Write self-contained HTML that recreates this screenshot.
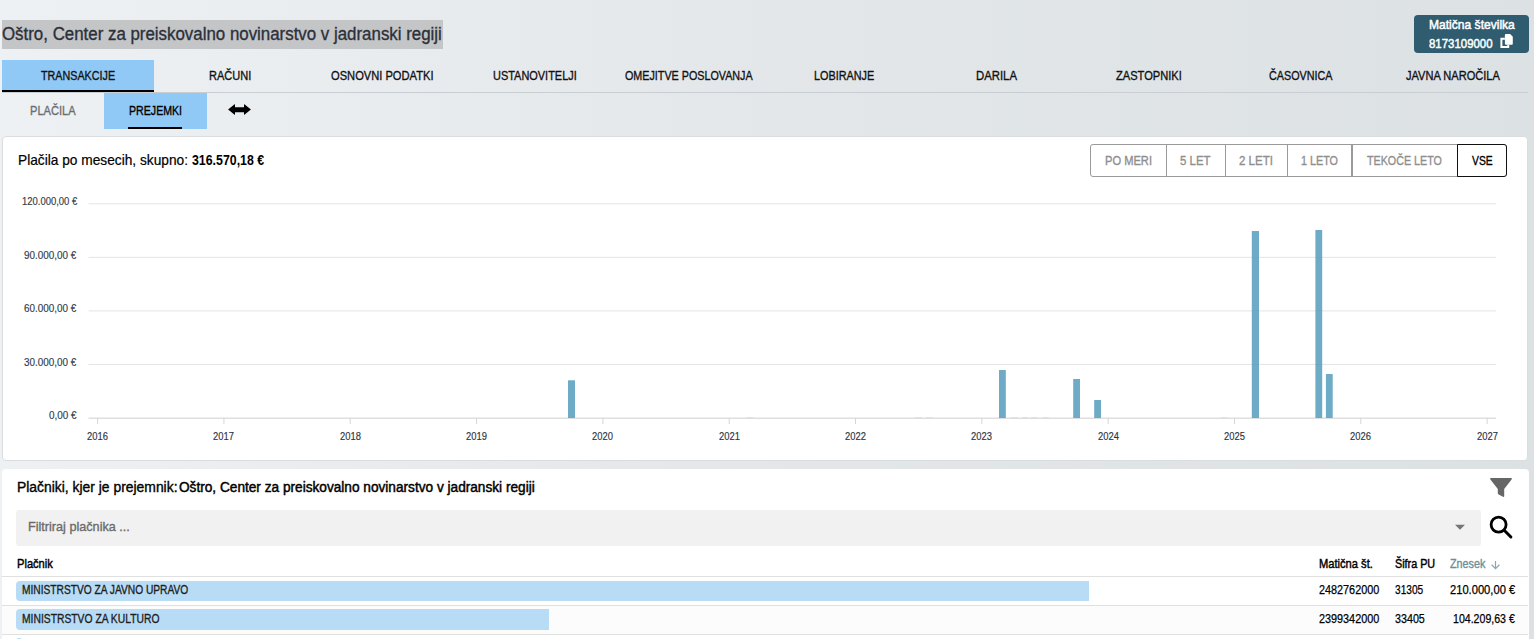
<!DOCTYPE html>
<html><head><meta charset="utf-8"><style>
html,body{margin:0;padding:0;width:1534px;height:639px;overflow:hidden;}
body{background:linear-gradient(90deg,#eef1f3 0%,#e3e7ea 50%,#dce1e4 100%);font-family:"Liberation Sans",sans-serif;position:relative;}
.t{position:absolute;white-space:nowrap;line-height:normal;transform-origin:0 0;-webkit-text-stroke:0.35px currentColor;}
.r{position:absolute;}
</style></head><body>
<div class="r" style="left:2px;top:20px;width:441px;height:29px;background:#c4c5c6;"></div>
<div class="t" style="left:2.30px;top:23.10px;font-size:18.9px;color:#2b303b;transform:scaleX(0.8932);">Oštro, Center za preiskovalno novinarstvo v jadranski regiji</div>
<div class="r" style="left:1414px;top:15px;width:115px;height:38px;background:#2f5c6f;border-radius:4px;"></div>
<div class="t" style="left:1428.80px;top:16.85px;font-size:13.2px;color:#fff;transform:scaleX(0.9149);-webkit-text-stroke:0.5px currentColor;">Matična številka</div>
<div class="t" style="left:1429.00px;top:35.75px;font-size:13.2px;color:#fff;transform:scaleX(0.8665);-webkit-text-stroke:0.5px currentColor;">8173109000</div>
<svg class="r" style="left:1499px;top:33.2px" width="16" height="15" viewBox="0 0 16 15"><path d="M5.9 5.8 H2.4 V13.9 H9.2 V11.7" fill="none" stroke="#fff" stroke-width="2"/><path d="M7 1.1 H11.2 L13.8 3.7 V10.7 Q13.8 11.7 12.8 11.7 H6.9 Q5.9 11.7 5.9 10.7 V2.1 Q5.9 1.1 7 1.1 Z" fill="#fff"/></svg>
<div class="r" style="left:2px;top:60px;width:152px;height:32px;background:#91c9f6;"></div>
<div class="r" style="left:2px;top:92px;width:1526px;height:1px;background:#c9ced2;"></div>
<div class="r" style="left:2px;top:90px;width:152px;height:2px;background:#000;"></div>
<div class="t" style="left:40.90px;top:67.87px;font-size:13.4px;color:#111;transform:scaleX(0.8028);">TRANSAKCIJE</div>
<div class="t" style="left:209.10px;top:67.87px;font-size:13.4px;color:#111;transform:scaleX(0.8249);">RAČUNI</div>
<div class="t" style="left:330.70px;top:67.87px;font-size:13.4px;color:#111;transform:scaleX(0.8314);">OSNOVNI PODATKI</div>
<div class="t" style="left:493.00px;top:67.87px;font-size:13.4px;color:#111;transform:scaleX(0.8176);">USTANOVITELJI</div>
<div class="t" style="left:625.40px;top:67.87px;font-size:13.4px;color:#111;transform:scaleX(0.8028);">OMEJITVE POSLOVANJA</div>
<div class="t" style="left:813.50px;top:67.87px;font-size:13.4px;color:#111;transform:scaleX(0.8094);">LOBIRANJE</div>
<div class="t" style="left:975.50px;top:67.87px;font-size:13.4px;color:#111;transform:scaleX(0.8474);">DARILA</div>
<div class="t" style="left:1115.50px;top:67.87px;font-size:13.4px;color:#111;transform:scaleX(0.8287);">ZASTOPNIKI</div>
<div class="t" style="left:1268.70px;top:67.87px;font-size:13.4px;color:#111;transform:scaleX(0.8038);">ČASOVNICA</div>
<div class="t" style="left:1406.20px;top:67.87px;font-size:13.4px;color:#111;transform:scaleX(0.8259);">JAVNA NAROČILA</div>
<div class="t" style="left:30.20px;top:103.07px;font-size:13.4px;color:#6b6e72;transform:scaleX(0.8279);">PLAČILA</div>
<div class="r" style="left:104px;top:93px;width:103px;height:36px;background:#91c9f6;"></div>
<div class="t" style="left:128.80px;top:103.07px;font-size:13.4px;color:#000;transform:scaleX(0.7925);">PREJEMKI</div>
<div class="r" style="left:128px;top:127px;width:54px;height:2px;background:#000;"></div>
<svg class="r" style="left:227px;top:103px" width="25" height="13" viewBox="0 0 25 13"><path d="M1.1 6.5 L7.6 1.2 Q8 1 8 1.5 V4.3 H17 V1.5 Q17 1 17.4 1.2 L23.9 6.5 L17.4 11.8 Q17 12 17 11.5 V9.2 H8 V11.5 Q8 12 7.6 11.8 Z" fill="#000"/></svg>
<div class="r" style="left:2px;top:136px;width:1526px;height:324.5px;background:#fff;box-sizing:border-box;border:1px solid #dadcdd;border-radius:4px;"></div>
<div class="t" style="left:17.80px;top:152.24px;font-size:14.1px;color:#000;transform:scaleX(0.9731);-webkit-text-stroke:0.2px currentColor;">Plačila po mesecih, skupno:</div>
<div class="t" style="left:192.10px;top:152.24px;font-size:14.1px;color:#000;font-weight:bold;transform:scaleX(0.8761);-webkit-text-stroke:0px currentColor;">316.570,18 €</div>
<div class="r" style="left:1090px;top:144px;width:417px;height:33px;background:#fff;box-sizing:border-box;border:1px solid #9a9a9a;border-radius:3px;"></div>
<div class="r" style="left:1166px;top:144px;width:1px;height:33px;background:#9a9a9a;"></div>
<div class="r" style="left:1225px;top:144px;width:1px;height:33px;background:#9a9a9a;"></div>
<div class="r" style="left:1287px;top:144px;width:1px;height:33px;background:#9a9a9a;"></div>
<div class="r" style="left:1351px;top:144px;width:2px;height:33px;background:#9a9a9a;"></div>
<div class="r" style="left:1457px;top:144px;width:50px;height:33px;background:#fff;box-sizing:border-box;border:1px solid #111;border-radius:0 3px 3px 0;"></div>
<div class="t" style="left:1104.50px;top:152.99px;font-size:13.6px;color:#8e8e8e;transform:scaleX(0.8188);">PO MERI</div>
<div class="t" style="left:1180.00px;top:152.99px;font-size:13.6px;color:#8e8e8e;transform:scaleX(0.8402);">5 LET</div>
<div class="t" style="left:1238.50px;top:152.99px;font-size:13.6px;color:#8e8e8e;transform:scaleX(0.8479);">2 LETI</div>
<div class="t" style="left:1301.00px;top:152.99px;font-size:13.6px;color:#8e8e8e;transform:scaleX(0.7940);">1 LETO</div>
<div class="t" style="left:1367.20px;top:152.99px;font-size:13.6px;color:#8e8e8e;transform:scaleX(0.7884);">TEKOČE LETO</div>
<div class="t" style="left:1471.50px;top:152.99px;font-size:13.6px;color:#000;transform:scaleX(0.7610);">VSE</div>
<svg class="r" style="left:0;top:0" width="1534" height="639"><rect x="88.5" y="203.30" width="1407.5" height="1" fill="#e4e4e4"/><rect x="88.5" y="256.85" width="1407.5" height="1" fill="#e4e4e4"/><rect x="88.5" y="310.40" width="1407.5" height="1" fill="#e4e4e4"/><rect x="88.5" y="363.95" width="1407.5" height="1" fill="#e4e4e4"/><rect x="88.5" y="417.6" width="1407.5" height="1.2" fill="#d6d6d6"/><rect x="97.10" y="418" width="1" height="6" fill="#d6d6d6"/><rect x="223.42" y="418" width="1" height="6" fill="#d6d6d6"/><rect x="349.74" y="418" width="1" height="6" fill="#d6d6d6"/><rect x="476.06" y="418" width="1" height="6" fill="#d6d6d6"/><rect x="602.38" y="418" width="1" height="6" fill="#d6d6d6"/><rect x="728.70" y="418" width="1" height="6" fill="#d6d6d6"/><rect x="855.02" y="418" width="1" height="6" fill="#d6d6d6"/><rect x="981.34" y="418" width="1" height="6" fill="#d6d6d6"/><rect x="1107.66" y="418" width="1" height="6" fill="#d6d6d6"/><rect x="1233.98" y="418" width="1" height="6" fill="#d6d6d6"/><rect x="1360.30" y="418" width="1" height="6" fill="#d6d6d6"/><rect x="1486.62" y="418" width="1" height="6" fill="#d6d6d6"/><rect x="568" y="380.3" width="7.00" height="37.70" fill="rgba(84,156,188,0.85)"/><rect x="999" y="370" width="6.80" height="48.00" fill="rgba(84,156,188,0.85)"/><rect x="1073.2" y="379" width="6.80" height="39.00" fill="rgba(84,156,188,0.85)"/><rect x="1094.2" y="400" width="6.80" height="18.00" fill="rgba(84,156,188,0.85)"/><rect x="1251.8" y="231" width="7.20" height="187.00" fill="rgba(84,156,188,0.85)"/><rect x="1315.4" y="230" width="6.80" height="188.00" fill="rgba(84,156,188,0.85)"/><rect x="1325.9" y="374" width="6.80" height="44.00" fill="rgba(84,156,188,0.85)"/><rect x="746.8" y="417" width="6.8" height="1" fill="#d3e6ee"/><rect x="915" y="417" width="6.8" height="1" fill="#d3e6ee"/><rect x="926" y="417" width="6.8" height="1" fill="#d3e6ee"/><rect x="1011" y="417" width="6.8" height="1" fill="#d3e6ee"/><rect x="1021.4" y="417" width="6.8" height="1" fill="#d3e6ee"/><rect x="1031" y="417" width="6.8" height="1" fill="#d3e6ee"/><rect x="1042" y="417" width="6.8" height="1" fill="#d3e6ee"/><rect x="1220.9" y="417" width="6.8" height="1" fill="#d3e6ee"/></svg>
<div class="t" style="left:21.50px;top:196.05px;font-size:10px;color:#333b49;transform:scaleX(0.9452);-webkit-text-stroke:0.15px currentColor;">120.000,00 €</div>
<div class="t" style="left:24.40px;top:249.60px;font-size:10px;color:#333b49;transform:scaleX(0.9905);-webkit-text-stroke:0.15px currentColor;">90.000,00 €</div>
<div class="t" style="left:24.40px;top:303.15px;font-size:10px;color:#333b49;transform:scaleX(0.9905);-webkit-text-stroke:0.15px currentColor;">60.000,00 €</div>
<div class="t" style="left:24.40px;top:356.70px;font-size:10px;color:#333b49;transform:scaleX(0.9905);-webkit-text-stroke:0.15px currentColor;">30.000,00 €</div>
<div class="t" style="left:49.20px;top:410.25px;font-size:10px;color:#333b49;transform:scaleX(0.9892);-webkit-text-stroke:0.15px currentColor;">0,00 €</div>
<div class="t" style="left:87.15px;top:429.93px;font-size:10.8px;color:#2c3340;transform:scaleX(0.8708);-webkit-text-stroke:0.15px currentColor;">2016</div>
<div class="t" style="left:213.47px;top:429.93px;font-size:10.8px;color:#2c3340;transform:scaleX(0.8708);-webkit-text-stroke:0.15px currentColor;">2017</div>
<div class="t" style="left:339.79px;top:429.93px;font-size:10.8px;color:#2c3340;transform:scaleX(0.8708);-webkit-text-stroke:0.15px currentColor;">2018</div>
<div class="t" style="left:466.11px;top:429.93px;font-size:10.8px;color:#2c3340;transform:scaleX(0.8708);-webkit-text-stroke:0.15px currentColor;">2019</div>
<div class="t" style="left:592.43px;top:429.93px;font-size:10.8px;color:#2c3340;transform:scaleX(0.8708);-webkit-text-stroke:0.15px currentColor;">2020</div>
<div class="t" style="left:718.75px;top:429.93px;font-size:10.8px;color:#2c3340;transform:scaleX(0.8708);-webkit-text-stroke:0.15px currentColor;">2021</div>
<div class="t" style="left:845.07px;top:429.93px;font-size:10.8px;color:#2c3340;transform:scaleX(0.8708);-webkit-text-stroke:0.15px currentColor;">2022</div>
<div class="t" style="left:971.39px;top:429.93px;font-size:10.8px;color:#2c3340;transform:scaleX(0.8708);-webkit-text-stroke:0.15px currentColor;">2023</div>
<div class="t" style="left:1097.71px;top:429.93px;font-size:10.8px;color:#2c3340;transform:scaleX(0.8708);-webkit-text-stroke:0.15px currentColor;">2024</div>
<div class="t" style="left:1224.03px;top:429.93px;font-size:10.8px;color:#2c3340;transform:scaleX(0.8708);-webkit-text-stroke:0.15px currentColor;">2025</div>
<div class="t" style="left:1350.35px;top:429.93px;font-size:10.8px;color:#2c3340;transform:scaleX(0.8708);-webkit-text-stroke:0.15px currentColor;">2026</div>
<div class="t" style="left:1476.67px;top:429.93px;font-size:10.8px;color:#2c3340;transform:scaleX(0.8708);-webkit-text-stroke:0.15px currentColor;">2027</div>
<div class="r" style="left:2px;top:469px;width:1527px;height:191px;background:#fff;border-radius:4px;"></div>
<div class="t" style="left:16.90px;top:480.31px;font-size:13.8px;color:#000;transform:scaleX(1.0063);">Plačniki, kjer je prejemnik:</div>
<div class="t" style="left:179.30px;top:480.31px;font-size:13.8px;color:#000;transform:scaleX(0.9892);-webkit-text-stroke:0.45px currentColor;">Oštro, Center za preiskovalno novinarstvo v jadranski regiji</div>
<svg class="r" style="left:1488px;top:476px" width="26" height="23" viewBox="0 0 26 23"><path d="M3 2 H23 Q24.5 2 23.6 3.4 L16.2 13 V20 Q16.2 21.6 14.5 20.6 L10.6 18.4 Q9.8 17.9 9.8 17 V13 L2.4 3.4 Q1.5 2 3 2 Z" fill="#666"/></svg>
<div class="r" style="left:16px;top:510px;width:1465px;height:36px;background:#f1f1f1;border-radius:3px;"></div>
<div class="t" style="left:27.50px;top:519.35px;font-size:13.2px;color:#6b6b6b;transform:scaleX(0.9586);">Filtriraj plačnika ...</div>
<svg class="r" style="left:1454px;top:524px" width="12" height="7" viewBox="0 0 12 7"><path d="M1 0.8 H11 L6 5.8 Z" fill="#757575"/></svg>
<svg class="r" style="left:1487px;top:514px" width="28" height="27" viewBox="0 0 28 27"><circle cx="11.6" cy="10.6" r="7.5" fill="none" stroke="#000" stroke-width="2.8"/><path d="M17.2 16.3 L23.9 23" stroke="#000" stroke-width="3" stroke-linecap="round"/></svg>
<div class="t" style="left:16.60px;top:555.53px;font-size:13px;color:#000;transform:scaleX(0.8548);-webkit-text-stroke:0.45px currentColor;">Plačnik</div>
<div class="t" style="left:1318.60px;top:555.53px;font-size:13px;color:#000;transform:scaleX(0.8569);-webkit-text-stroke:0.45px currentColor;">Matična št.</div>
<div class="t" style="left:1395.10px;top:555.53px;font-size:13px;color:#000;transform:scaleX(0.8285);-webkit-text-stroke:0.45px currentColor;">Šifra PU</div>
<div class="t" style="left:1450.10px;top:555.53px;font-size:13px;color:#6a8e9a;transform:scaleX(0.8290);">Znesek</div>
<svg class="r" style="left:1490px;top:560px" width="11" height="10" viewBox="0 0 11 10"><path d="M5.5 1 V8.5 M1.6 4.8 L5.5 8.6 L9.4 4.8" fill="none" stroke="#8aa8b2" stroke-width="1.2"/></svg>
<div class="r" style="left:2px;top:576px;width:1526px;height:1px;background:#e0e0e0;"></div>
<div class="r" style="left:2px;top:605px;width:1526px;height:1px;background:#e0e0e0;"></div>
<div class="r" style="left:2px;top:606px;width:1526px;height:28px;background:#fcfcfc;"></div>
<div class="r" style="left:2px;top:634px;width:1526px;height:1px;background:#e0e0e0;"></div>
<div class="r" style="left:16px;top:581px;width:1073px;height:20px;background:#b9dcf6;border-radius:4px 0 0 4px;"></div>
<div class="r" style="left:16px;top:609px;width:533px;height:21px;background:#b9dcf6;border-radius:4px 0 0 4px;"></div>
<div class="r" style="left:16px;top:638.3px;width:5px;height:21.700000000000045px;background:#b9dcf6;border-radius:3px 0 0 3px;"></div>
<div class="t" style="left:21.80px;top:582.80px;font-size:12.6px;color:#1e1e1e;transform:scaleX(0.8101);">MINISTRSTVO ZA JAVNO UPRAVO</div>
<div class="t" style="left:21.80px;top:611.60px;font-size:12.6px;color:#1e1e1e;transform:scaleX(0.8194);">MINISTRSTVO ZA KULTURO</div>
<div class="t" style="left:1318.60px;top:582.60px;font-size:12.6px;color:#000;transform:scaleX(0.8602);-webkit-text-stroke:0.25px currentColor;">2482762000</div>
<div class="t" style="left:1318.60px;top:611.60px;font-size:12.6px;color:#000;transform:scaleX(0.8602);-webkit-text-stroke:0.25px currentColor;">2399342000</div>
<div class="t" style="left:1395.10px;top:582.60px;font-size:12.6px;color:#000;transform:scaleX(0.8057);-webkit-text-stroke:0.25px currentColor;">31305</div>
<div class="t" style="left:1395.10px;top:611.60px;font-size:12.6px;color:#000;transform:scaleX(0.8514);-webkit-text-stroke:0.25px currentColor;">33405</div>
<div class="t" style="left:1449.90px;top:582.60px;font-size:12.6px;color:#000;transform:scaleX(0.8859);-webkit-text-stroke:0.25px currentColor;">210.000,00 €</div>
<div class="t" style="left:1453.20px;top:611.60px;font-size:12.6px;color:#000;transform:scaleX(0.8410);-webkit-text-stroke:0.25px currentColor;">104.209,63 €</div>
</body></html>
